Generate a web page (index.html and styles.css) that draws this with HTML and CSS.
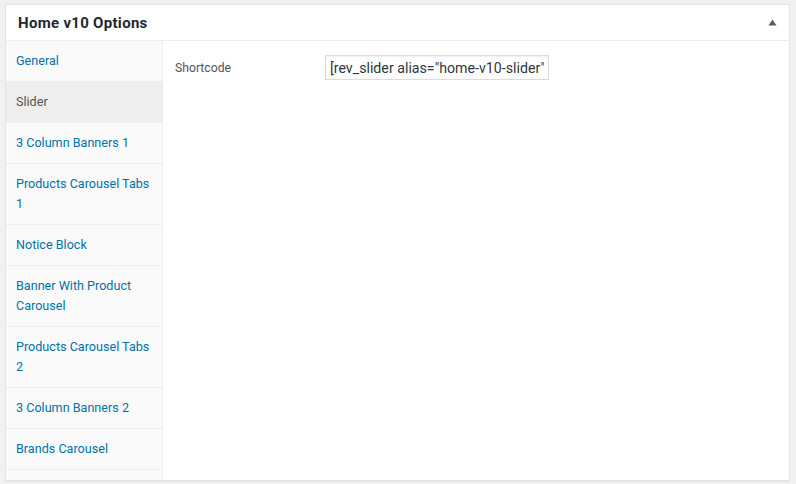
FILE: index.html
```html
<!DOCTYPE html>
<html>
<head>
<meta charset="utf-8">
<link rel="stylesheet" href="styles.css">
</head>
<body>
<div class="postbox">
  <div class="hndle">
    <h2 class="title">Home v10 Options</h2>
    <svg class="toggle" width="9" height="7" viewBox="0 0 9 7"><polygon points="4.5,0.5 8.5,6.5 0.5,6.5" fill="#555d66"/></svg>
  </div>
  <div class="inside">
    <ul class="tabs">
      <li class="tab"><a>General</a></li>
      <li class="tab active"><a>Slider</a></li>
      <li class="tab"><a>3 Column Banners 1</a></li>
      <li class="tab"><a>Products Carousel Tabs 1</a></li>
      <li class="tab"><a>Notice Block</a></li>
      <li class="tab"><a>Banner With Product Carousel</a></li>
      <li class="tab"><a>Products Carousel Tabs 2</a></li>
      <li class="tab"><a>3 Column Banners 2</a></li>
      <li class="tab"><a>Brands Carousel</a></li>
      <li class="tab tab-empty"><a></a></li>
    </ul>
    <div class="panel">
      <div class="field">
        <label class="label">Shortcode</label>
        <input class="input" type="text" value="[rev_slider alias=&quot;home-v10-slider&quot;]">
      </div>
    </div>
  </div>
</div>
</body>
</html>
```
FILE: styles.css
```css
html, body {
  margin: 0;
  padding: 0;
  background: #f1f1f1;
}
body {
  padding: 4px 6px 0 5px;
  width: 796px;
  height: 484px;
  box-sizing: border-box;
  overflow: hidden;
  font-family: Roboto, "Liberation Sans", sans-serif;
}
.postbox {
  background: #fff;
  border: 1px solid #e5e5e5;
  box-shadow: 0 1px 1px rgba(0,0,0,.04);
  height: 477px;
  box-sizing: border-box;
  display: flex;
  flex-direction: column;
}
.hndle {
  height: 36px;
  box-sizing: border-box;
  border-bottom: 1px solid #eee;
  display: flex;
  align-items: center;
  padding: 0 12px;
}
.title {
  margin: 0;
  flex: 1;
  font-size: 15px;
  letter-spacing: 0.3px;
  font-weight: 700;
  color: #23282d;
  line-height: 20px;
}
.toggle {
  display: block;
  margin-right: 0;
  margin-top: -1px;
}
.inside {
  flex: 1;
  display: flex;
  min-height: 0;
}
.tabs {
  list-style: none;
  margin: 0;
  padding: 0;
  width: 156px;
  background: #fafafa;
  border-right: 1px solid #eee;
  display: flex;
  flex-direction: column;
  overflow: hidden;
}
.tab a {
  display: block;
  padding: 10px 4px 10px 10px;
  line-height: 20px;
  font-size: 12.6px;
  color: #0073aa;
  border-bottom: 1px solid #eee;
}
.tab.active a {
  background: #eee;
  color: #555;
}
.tab-empty a {
  height: 20px;
}
.panel {
  flex: 1;
  padding: 14px 20px 0 12px;
}
.field {
  display: flex;
  align-items: center;
}
.label {
  width: 150px;
  font-size: 12.2px;
  color: #555;
}
.input {
  width: 224px;
  height: 25px;
  box-sizing: border-box;
  border: 1px solid #ddd;
  box-shadow: inset 0 1px 2px rgba(0,0,0,.07);
  padding: 2px 4px;
  font-family: Roboto, "Liberation Sans", sans-serif;
  font-size: 14.2px;
  color: #32373c;
  background: #fff;
  margin: 0;
  outline: none;
}
```
